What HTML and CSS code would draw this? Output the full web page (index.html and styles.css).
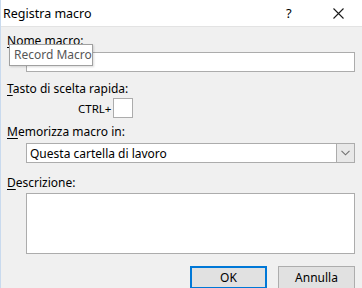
FILE: index.html
```html
<!DOCTYPE html>
<html>
<head>
<meta charset="utf-8">
<link rel="stylesheet" href="styles.css">
</head>
<body>
<div class="dialog">
  <div class="titlebar">
    <span class="title">Registra macro</span>
    <span class="help">?</span>
    <span class="close"><svg width="11" height="11" viewBox="0 0 11 11"><path d="M0.5 0.5 L10.5 10.5 M10.5 0.5 L0.5 10.5" stroke="#1a1a1a" stroke-width="1.1" fill="none"/></svg></span>
  </div>
  <div class="content">
    <div class="label l1"><u>N</u>ome macro:</div>
    <div class="field input"></div>
    <div class="label l2"><u>T</u>asto di scelta rapida:</div>
    <div class="ctrl-row"><span class="ctrl">CTRL+</span><span class="keybox"></span></div>
    <div class="label l3"><u>M</u>emorizza macro in:</div>
    <div class="field select"><span class="sel-text">Questa cartella di lavoro</span><span class="drop"><svg width="9" height="6" viewBox="0 0 9 6"><path d="M0.5 0.8 L4.5 4.8 L8.5 0.8" stroke="#707070" stroke-width="1.1" fill="none"/></svg></span></div>
    <div class="label l4"><u>D</u>escrizione:</div>
    <div class="field textarea"></div>
    <div class="buttons">
      <span class="btn ok">OK</span>
      <span class="btn">Annulla</span>
    </div>
  </div>
  <div class="tooltip">Record Macro</div>
</div>
</body>
</html>
```
FILE: styles.css
```css
html, body {
  margin: 0;
  padding: 0;
}
body {
  width: 362px;
  height: 288px;
  overflow: hidden;
  background: #f0f0f0;
  font-family: "Noto Sans", "Open Sans", sans-serif;
  font-size: 12px;
  color: #000;
}
.dialog {
  position: relative;
  height: 288px;
  border-left: 1px solid #c9daee;
  box-sizing: border-box;
}
.titlebar {
  height: 26px;
  background: #fff;
  border-bottom: 1px solid #e3e3e3;
  display: flex;
  align-items: center;
  position: relative;
}
.title {
  padding-left: 2px;
  font-size: 12.5px;
  flex: 1;
}
.help {
  width: 12px;
  margin-right: 35px;
  font-size: 13px;
}
.close {
  display: flex;
  margin-right: 18px;
}
.content {
  padding: 0 7px 0 6px;
}
.label {
  height: 15px;
  line-height: 15px;
}
.label u {
  text-decoration-thickness: 1px;
  text-underline-offset: 2px;
}
.l1 { margin-top: 6px; }
.l2 { margin-top: 9px; }
.l3 { margin-top: 6px; }
.l4 { margin-top: 12px; }
.field {
  margin-left: 19px;
  background: #fff;
  border: 1px solid #acacac;
  box-sizing: border-box;
}
.input {
  margin-top: 4px;
  height: 20px;
}
.ctrl-row {
  margin-top: 2px;
  height: 20px;
  display: flex;
  align-items: center;
  padding-left: 71px;
}
.ctrl {
  font-size: 11.5px;
  margin-right: 2px;
}
.keybox {
  width: 20px;
  height: 20px;
  background: #fff;
  border: 1px solid #acacac;
  box-sizing: border-box;
}
.select {
  margin-top: 4px;
  height: 20px;
  display: flex;
  align-items: center;
}
.sel-text {
  flex: 1;
  padding-left: 3px;
}
.drop {
  width: 17px;
  height: 18px;
  background: #e8e8e8;
  border-left: 1px solid #acacac;
  display: flex;
  align-items: center;
  justify-content: center;
}
.textarea {
  margin-top: 3px;
  height: 61px;
}
.buttons {
  margin-top: 12px;
  display: flex;
  justify-content: flex-end;
  gap: 11px;
}
.btn {
  width: 77px;
  height: 23px;
  box-sizing: border-box;
  border: 1px solid #adadad;
  background: #e1e1e1;
  display: flex;
  align-items: center;
  justify-content: center;
}
.btn.ok {
  border: 2px solid #0078d7;
}
.tooltip {
  position: absolute;
  left: 8px;
  top: 44px;
  width: 84px;
  height: 22px;
  box-sizing: border-box;
  background: #fff;
  border: 1px solid #a0a0a0;
  color: #575757;
  padding-left: 4px;
  line-height: 20px;
  font-size: 12px;
  box-shadow: 1px 1px 2px rgba(0,0,0,0.15);
}
```
